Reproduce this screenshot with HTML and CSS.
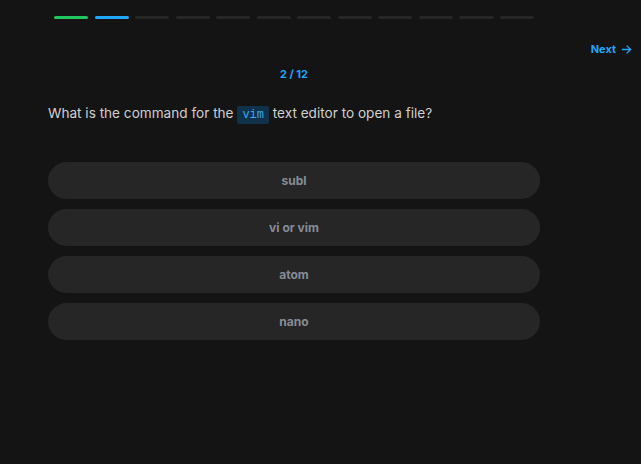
FILE: index.html
```html
<!DOCTYPE html>
<html>
<head>
<meta charset="utf-8">
<link rel="stylesheet" href="styles.css">
</head>
<body>
<div class="page">
  <div class="progress">
    <span class="seg done"></span>
    <span class="seg current"></span>
    <span class="seg"></span>
    <span class="seg"></span>
    <span class="seg"></span>
    <span class="seg"></span>
    <span class="seg"></span>
    <span class="seg"></span>
    <span class="seg"></span>
    <span class="seg"></span>
    <span class="seg"></span>
    <span class="seg"></span>
  </div>
  <div class="topbar">
    <a class="next">Next
      <svg width="11" height="11" viewBox="0 0 12 12" fill="none" stroke="currentColor" stroke-width="1.4" stroke-linecap="round" stroke-linejoin="round"><path d="M1.5 6h9M6.5 2l4 4-4 4"/></svg>
    </a>
  </div>
  <div class="content">
    <div class="counter">2 / 12</div>
    <div class="question">What is the command for the <code class="code">vim</code> text editor to open a file?</div>
    <div class="options">
      <div class="option">subl</div>
      <div class="option">vi or vim</div>
      <div class="option">atom</div>
      <div class="option">nano</div>
    </div>
  </div>
</div>
</body>
</html>
```
FILE: styles.css
```css
html, body {
  margin: 0;
  padding: 0;
  background: #141414;
  height: 100%;
}
body {
  font-family: Inter, "Noto Sans", sans-serif;
}
.page {
  width: 641px;
  height: 464px;
}
.progress {
  display: flex;
  gap: 6.5px;
  width: 480px;
  margin-left: 54px;
  padding-top: 16px;
}
.seg {
  flex: 1;
  height: 3px;
  border-radius: 2px;
  background: #262626;
}
.seg.done { background: #22c55e; }
.seg.current { background: #1ea7fd; }
.topbar {
  display: flex;
  justify-content: flex-end;
  padding: 20px 9px 0 0;
  height: 20px;
}
.next {
  display: flex;
  align-items: center;
  gap: 5px;
  color: #1ea7fd;
  font-size: 11px;
  font-weight: 700;
}
.content {
  margin-left: 48px;
  width: 492px;
}
.counter {
  text-align: center;
  color: #1ea7fd;
  font-size: 11px;
  font-weight: 700;
  margin-top: 8px;
  line-height: 14px;
}
.question {
  margin-top: 22px;
  color: #d0d0d0;
  font-size: 13.6px;
  line-height: 20px;
}
.code {
  font-family: "Liberation Mono", "DejaVu Sans Mono", monospace;
  font-size: 12px;
  color: #3ba7ea;
  background: #0f3149;
  padding: 2px 5px;
  border-radius: 2px;
}
.options {
  margin-top: 37px;
  display: flex;
  flex-direction: column;
  gap: 10px;
}
.option {
  height: 37px;
  border-radius: 19px;
  background: #262626;
  color: #868c96;
  font-size: 12px;
  font-weight: 700;
  display: flex;
  align-items: center;
  justify-content: center;
}
```
